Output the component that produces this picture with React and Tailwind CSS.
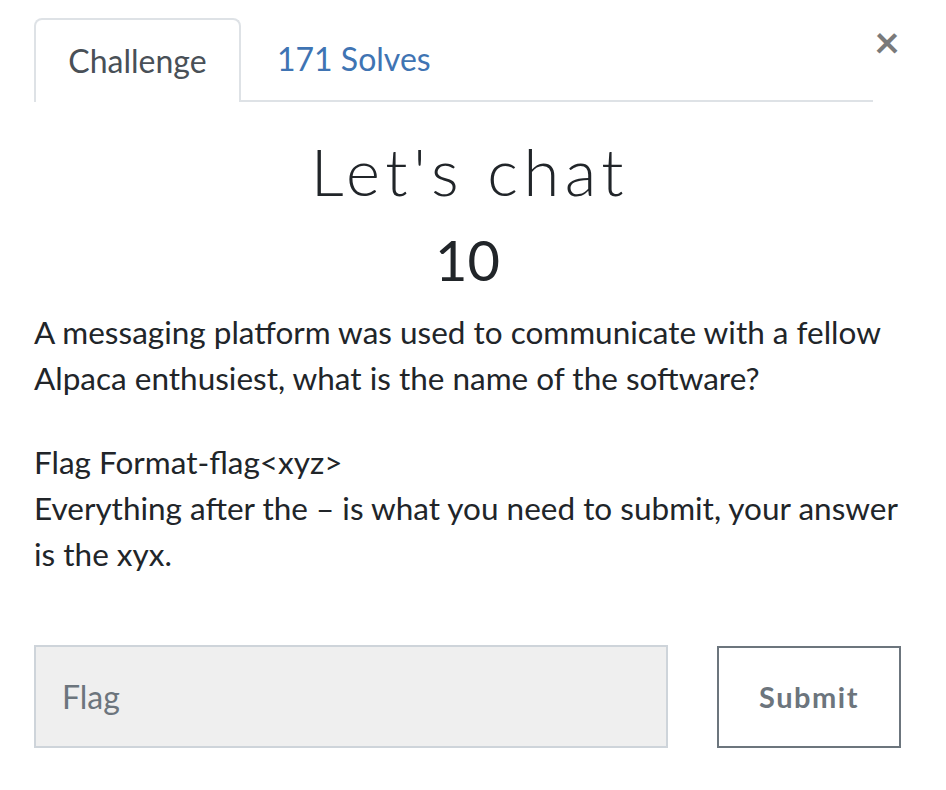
import React from "react";

const App = () => {
  return (
    <div
      className="w-[946px] h-[790px] bg-white pl-[34px] pr-[45px] pt-[18px] text-[#212529]"
      style={{ fontFamily: "Lato, 'Open Sans', sans-serif" }}
    >
      {/* Tabs + close */}
      <div className="flex items-start">
        <div className="flex flex-1 items-end border-b-2 border-[#dee2e6]">
          <div className="-mb-[2px] flex h-[84px] w-[207px] items-center justify-center rounded-t-[8px] border-2 border-b-0 border-[#dee2e6] bg-white text-[32px] text-[#495057]">
            Challenge
          </div>
          <div className="flex h-[82px] items-center pl-[36px] text-[32px] text-[#3f74b3]">
            171 Solves
          </div>
        </div>
        <button className="mt-[1px] w-[28px] text-center text-[44px] font-bold leading-none text-[#7a7a7a]">
          ×
        </button>
      </div>

      {/* Title */}
      <h2 className="mt-[30px] pl-[5px] text-center text-[65px] font-light leading-[1.2] tracking-[5.5px]">
        Let's chat
      </h2>
      <h3 className="mt-[16px] text-center text-[56px] leading-[1.2]">10</h3>

      {/* Description */}
      <div className="mt-[16px] text-[31.5px] leading-[46px]">
        <p>
          A messaging platform was used to communicate with a fellow Alpaca
          enthusiest, what is the name of the software?
        </p>
        <p className="mt-[38px]">
          Flag Format-flag&lt;xyz&gt;
          <br />
          Everything after the – is what you need to submit, your answer is
          the xyx.
        </p>
      </div>

      {/* Flag form */}
      <div className="mt-[68px] flex items-center gap-[49px]">
        <input
          placeholder="Flag"
          className="h-[103px] flex-1 border-2 border-[#ced4da] bg-[#efefef] px-[26px] text-[32px] text-[#495057] placeholder:text-[#6c757d] outline-none"
        />
        <button className="h-[102px] w-[184px] border-2 border-[#6c757d] bg-white text-[29px] font-bold tracking-[1.5px] text-[#6c757d]">
          Submit
        </button>
      </div>
    </div>
  );
};

export default App;
